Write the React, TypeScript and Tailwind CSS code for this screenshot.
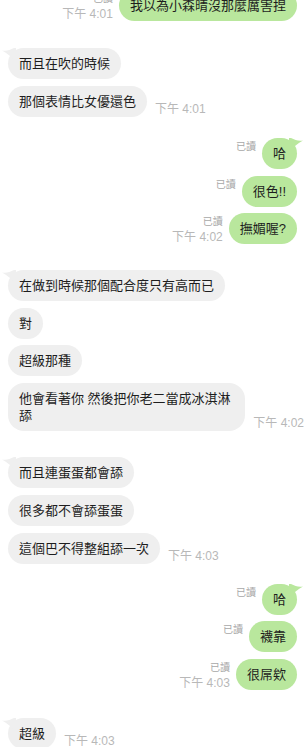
import React from "react";

type Item = {
  side: "l" | "r";
  text: string;
  read?: boolean;
  time?: string;
  tail?: boolean;
  mt: string;
  wide?: boolean;
};

const items: Item[] = [
  { side: "r", text: "我以為小森晴沒那麼厲害捏", read: true, time: "下午 4:01", tail: true, mt: "-mt-[10px]" },
  { side: "l", text: "而且在吹的時候", tail: true, mt: "mt-[27px]" },
  { side: "l", text: "那個表情比女優還色", time: "下午 4:01", mt: "mt-[7px]" },
  { side: "r", text: "哈", read: true, tail: true, mt: "mt-[21px]" },
  { side: "r", text: "很色!!", read: true, mt: "mt-[7px]" },
  { side: "r", text: "撫媚喔?", read: true, time: "下午 4:02", mt: "mt-[6px]" },
  { side: "l", text: "在做到時候那個配合度只有高而已", tail: true, mt: "mt-[26px]" },
  { side: "l", text: "對", mt: "mt-[7px]" },
  { side: "l", text: "超級那種", mt: "mt-[6px]" },
  { side: "l", text: "他會看著你 然後把你老二當成冰淇淋舔", time: "下午 4:02", mt: "mt-[7px]", wide: true },
  { side: "l", text: "而且連蛋蛋都會舔", tail: true, mt: "mt-[26px]" },
  { side: "l", text: "很多都不會舔蛋蛋", mt: "mt-[7px]" },
  { side: "l", text: "這個巴不得整組舔一次", time: "下午 4:03", mt: "mt-[7px]" },
  { side: "r", text: "哈", read: true, tail: true, mt: "mt-[20px]" },
  { side: "r", text: "襪靠", read: true, mt: "mt-[6px]" },
  { side: "r", text: "很屌欸", read: true, time: "下午 4:03", mt: "mt-[7px]" },
  { side: "l", text: "超級", tail: true, time: "下午 4:03", mt: "mt-[28px]" },
];

const font = { fontFamily: '"Liberation Sans", "Noto Sans CJK TC", sans-serif' };

function LeftTail() {
  return (
    <svg className="absolute left-[-6px] top-0" width="14" height="14" viewBox="0 0 14 14">
      <path d="M0 2.5 C4 3.5 8 2 12 0 L14 0 L14 13 C10 10 5 5 0 2.5 Z" fill="#efefef" />
    </svg>
  );
}

function RightTail() {
  return (
    <svg className="absolute right-[-6px] top-0" width="14" height="14" viewBox="0 0 14 14">
      <path d="M14 2.5 C10 3.5 6 2 2 0 L0 0 L0 13 C4 10 9 5 14 2.5 Z" fill="#b9e79d" />
    </svg>
  );
}

function Row({ it }: { it: Item }) {
  if (it.side === "l") {
    return (
      <div className={`flex items-end pl-[8px] ${it.mt}`}>
        <div
          className={`relative rounded-[16px] bg-[#efefef] px-[11px] py-[7px] text-[13px] leading-[17px] text-[#1e1e1e] ${
            it.wide ? "max-w-[238px]" : ""
          }`}
        >
          {it.tail && <LeftTail />}
          <span className="relative">{it.text}</span>
        </div>
        {it.time && (
          <div className="ml-[8px] mb-[1px] whitespace-nowrap text-[12px] leading-[14px] text-[#b8b8b8]">
            {it.time}
          </div>
        )}
      </div>
    );
  }
  return (
    <div className={`flex items-start justify-end pr-[7px] ${it.mt}`}>
      <div className="mr-[6px] flex flex-col items-end pt-[3px]">
        {it.read && <div className="text-[10px] leading-[12px] text-[#a8a8a8]">已讀</div>}
        {it.time && (
          <div className="mt-[2px] whitespace-nowrap text-[12px] leading-[14px] text-[#b8b8b8]">{it.time}</div>
        )}
      </div>
      <div className="relative rounded-[16px] bg-[#b9e79d] px-[11px] py-[7px] text-[13px] leading-[17px] text-[#1e1e1e]">
        {it.tail && <RightTail />}
        <span className="relative">{it.text}</span>
      </div>
    </div>
  );
}

export default function App() {
  return (
    <div className="h-[747px] w-[304px] overflow-hidden bg-white" style={font}>
      <div className="flex flex-col">
        {items.map((it, i) => (
          <Row key={i} it={it} />
        ))}
      </div>
    </div>
  );
}
